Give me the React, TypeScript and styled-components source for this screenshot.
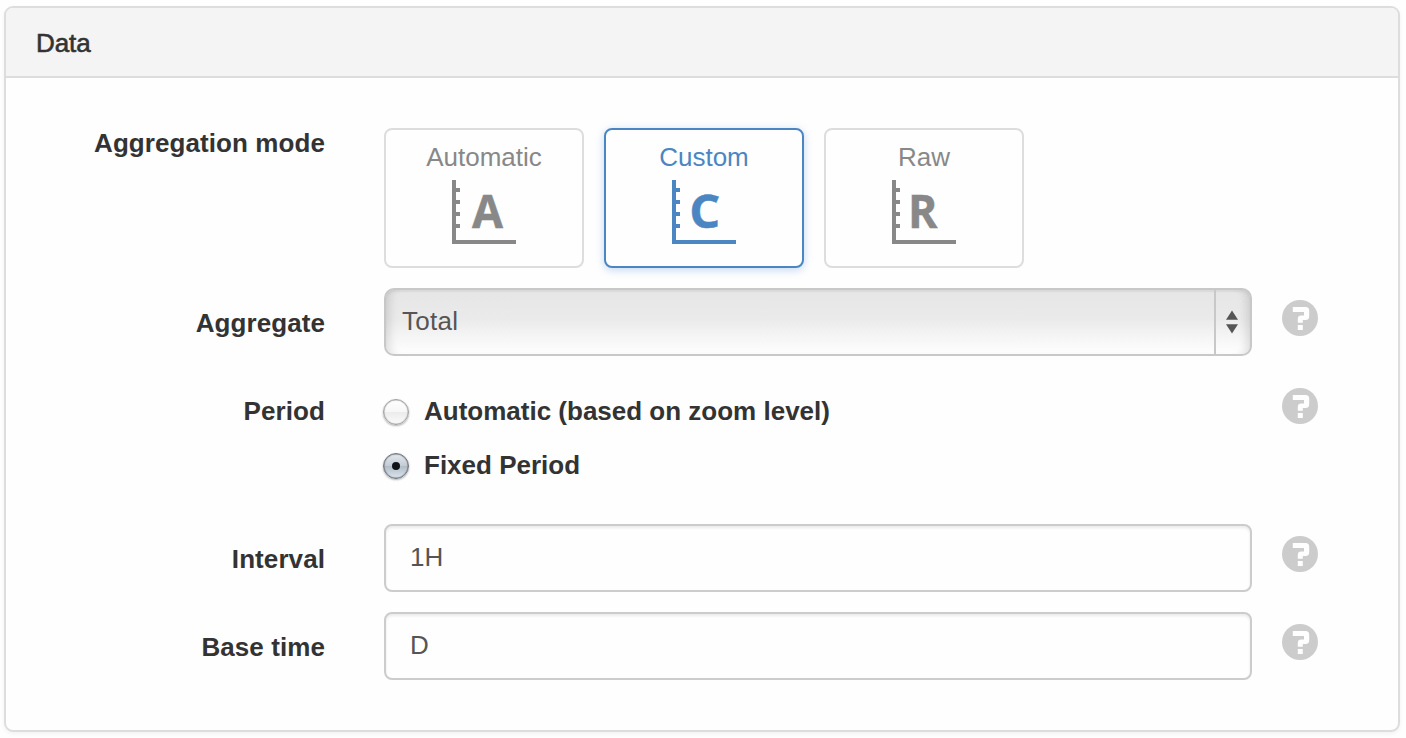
import React, { useState } from "react";
import styled, { createGlobalStyle, css } from "styled-components";

const GlobalStyle = createGlobalStyle`
  *, *::before, *::after { box-sizing: border-box; }
  body {
    margin: 0;
    background: #fefefe;
    color: #333;
    font: 26px/30px "Liberation Sans", Arial, sans-serif;
  }
`;

const Page = styled.main`
  height: 738px;
  padding: 6px 6px 6px 4px;
`;

const Panel = styled.section`
  height: 726px;
  border: 2px solid #ddd;
  border-radius: 9px;
  background: #fefefe;
  box-shadow: 0 2px 4px rgba(0, 0, 0, 0.05);
  overflow: hidden;
`;

const PanelHeader = styled.h2`
  margin: 0;
  height: 70px;
  padding: 20px 30px;
  border-bottom: 2px solid #ddd;
  background: #f4f4f4;
  font-size: 26px;
  font-weight: 400;
  line-height: 30px;
  letter-spacing: -0.1px;
  -webkit-text-stroke: 0.6px #333;
`;

const PanelBody = styled.div`
  display: flex;
  flex-direction: column;
  gap: 20px;
  padding-top: 50px;
`;

const Row = styled.div<{ $height: number }>`
  display: grid;
  grid-template-columns: 319px 59px 868px 30px 36px;
  height: ${(p) => p.$height}px;
`;

const Label = styled.label<{ $flush?: boolean }>`
  grid-column: 1;
  padding-top: ${(p) => (p.$flush ? 0 : 20)}px;
  font-weight: 700;
  text-align: right;
  letter-spacing: 0.08px;
`;

const Field = styled.div`
  grid-column: 3;
`;

const HelpButton = styled.span`
  grid-column: 5;
  height: 36px;
  margin-top: 12px;
  svg { display: block; }
`;

const ModeGroup = styled.div`
  display: flex;
  gap: 20px;
`;

const ModeButton = styled.button<{ $active: boolean }>`
  display: flex;
  flex-direction: column;
  align-items: center;
  gap: 8px;
  width: 200px;
  height: 140px;
  padding: 12px 0 0;
  border: 2px solid #ddd;
  border-radius: 8px;
  background: #fefefe;
  color: #888;
  font: inherit;
  ${(p) =>
    p.$active &&
    css`
      border-color: #4b86c2;
      color: #4b86c2;
      box-shadow: 0 2px 8px rgba(75, 134, 220, 0.32);
    `}
`;

const ModeGraphic = styled.svg`
  overflow: visible;
`;

const ModeLetter = styled.text`
  font-family: "Open Sans", sans-serif;
  font-size: 47px;
  font-weight: 700;
  stroke: currentColor;
  stroke-width: 0.5px;
`;

const Select = styled.div`
  display: flex;
  height: 68px;
  border: 2px solid #c8c8c8;
  border-radius: 10px;
  background: linear-gradient(#e6e6e6, #eaeaea 45%, #f4f4f4 70%, #fefefe);
  box-shadow: inset 10px 0 8px -6px rgba(0, 0, 0, 0.11),
    inset -10px 0 8px -6px rgba(0, 0, 0, 0.11),
    inset 0 2px 2px rgba(0, 0, 0, 0.05);
  color: #555;
`;

const SelectValue = styled.span`
  flex: 1;
  padding: 16px;
  letter-spacing: 0.3px;
`;

const SelectArrows = styled.span`
  width: 36px;
  border-left: 2px solid #c8c8c8;
  padding: 20px 10px;
  svg { display: block; }
`;

const RadioList = styled.div`
  grid-column: 3;
  display: flex;
  flex-direction: column;
  gap: 24px;
  padding-top: 20px;
`;

const RadioOption = styled.label`
  display: flex;
  height: 30px;
  font-weight: 700;
`;

const RadioMark = styled.span<{ $checked: boolean }>`
  display: grid;
  place-items: center;
  width: 26px;
  height: 26px;
  margin: 3px 15px 0 -1px;
  border: 1.5px solid ${(p) => (p.$checked ? "#6f757b" : "#a0a0a0")};
  border-radius: 50%;
  background: ${(p) =>
    p.$checked
      ? "linear-gradient(#e3e8ee, #c4ccd5 48%, #b3bdc7 52%, #d9e5ef)"
      : "linear-gradient(#fff, #f7f7f7 48%, #ececec 52%, #fafafa)"};
  box-shadow: 0 1px 2px rgba(0, 0, 0, 0.3),
    inset 0 0 1px 0.5px ${(p) => (p.$checked ? "#7c8288" : "#b8b8b8")};
  &::after {
    content: "";
    width: 8px;
    height: 8px;
    border-radius: 50%;
    background: ${(p) => (p.$checked ? "#101418" : "transparent")};
  }
`;

const TextInput = styled.input`
  display: block;
  width: 100%;
  height: 68px;
  padding: 0 24px 2px;
  border: 2px solid #ccc;
  border-radius: 8px;
  outline: 0;
  background: #fefefe;
  box-shadow: inset 0 2px 3px rgba(0, 0, 0, 0.08);
  color: #555;
  font: inherit;
`;

const modes = [
  { name: "Automatic", letter: "A", x: 20, width: 31 },
  { name: "Custom", letter: "C", x: 17.2, width: 31 },
  { name: "Raw", letter: "R", x: 16, width: 29.5 },
];

function ModeIcon({ letter, x, width }: { letter: string; x: number; width: number }) {
  return (
    <ModeGraphic width="64" height="64" viewBox="0 0 64 64" fill="currentColor">
      <path d="M0 0h4v8h4v4H4v8h4v4H4v8h4v4H4v8h4v4H4v12h60v4H0z" />
      <ModeLetter x={x} y="48" textLength={width} lengthAdjust="spacingAndGlyphs">
        {letter}
      </ModeLetter>
    </ModeGraphic>
  );
}

function Help() {
  return (
    <HelpButton>
      <svg width="36" height="36" viewBox="0 0 36 36">
        <circle cx="18" cy="18" r="18" fill="#ccc" />
        <path
          fill="#fefefe"
          d="M10.8 7H23.6Q27.2 7 27.2 10.6V16.2Q27.2 20 23.6 20H20.8V22.8H15.8V19Q15.8 15.6 19.2 15.6H22V12H10.8ZM15.8 25h5v5h-5Z"
        />
      </svg>
    </HelpButton>
  );
}

export default function App() {
  const [mode, setMode] = useState("Custom");
  const [period, setPeriod] = useState("Fixed Period");
  return (
    <Page>
      <GlobalStyle />
      <Panel>
        <PanelHeader>Data</PanelHeader>
        <PanelBody>
          <Row $height={140}>
            <Label $flush>Aggregation mode</Label>
            <Field>
              <ModeGroup>
                {modes.map((m) => (
                  <ModeButton key={m.name} $active={m.name === mode} onClick={() => setMode(m.name)}>
                    {m.name}
                    <ModeIcon letter={m.letter} x={m.x} width={m.width} />
                  </ModeButton>
                ))}
              </ModeGroup>
            </Field>
          </Row>
          <Row $height={68}>
            <Label>Aggregate</Label>
            <Field>
              <Select>
                <SelectValue>Total</SelectValue>
                <SelectArrows>
                  <svg width="12" height="24" viewBox="0 0 12 24" fill="#555">
                    <path d="M6 .5 12 9.7H0ZM0 14.2H12L6 23.4Z" />
                  </svg>
                </SelectArrows>
              </Select>
            </Field>
            <Help />
          </Row>
          <Row $height={128}>
            <Label>Period</Label>
            <RadioList>
              {["Automatic (based on zoom level)", "Fixed Period"].map((name) => (
                <RadioOption key={name} onClick={() => setPeriod(name)}>
                  <RadioMark $checked={name === period} />
                  {name}
                </RadioOption>
              ))}
            </RadioList>
            <Help />
          </Row>
          <Row $height={68}>
            <Label>Interval</Label>
            <Field>
              <TextInput defaultValue="1H" />
            </Field>
            <Help />
          </Row>
          <Row $height={68}>
            <Label>Base time</Label>
            <Field>
              <TextInput defaultValue="D" />
            </Field>
            <Help />
          </Row>
        </PanelBody>
      </Panel>
    </Page>
  );
}
